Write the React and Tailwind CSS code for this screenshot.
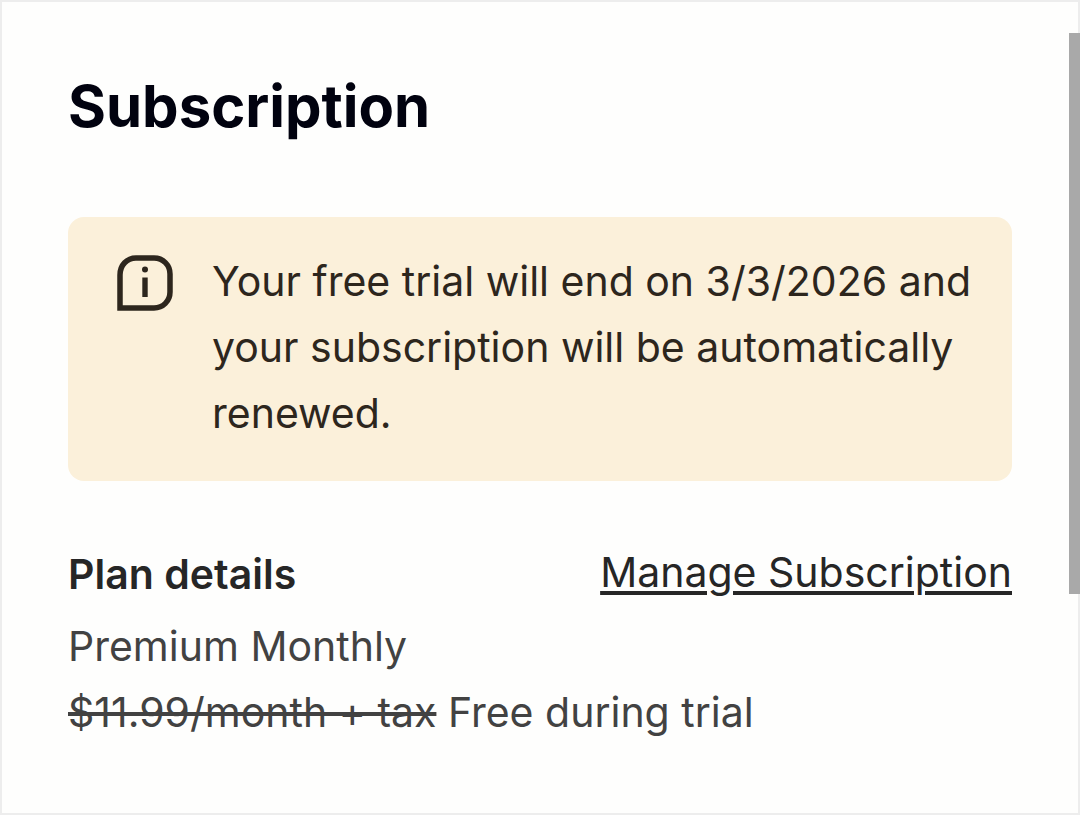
import React from "react";

const InfoIcon = () => (
  <svg className="mt-[7px] size-14 shrink-0" viewBox="0 0 56 56" fill="none" aria-hidden="true">
    <path
      d="M3 53V20C3 10 10 3 19 3H37C46 3 53 10 53 19V37C53 46 46 53 37 53Z"
      stroke="currentColor"
      strokeWidth="5.5"
    />
    <circle cx="28" cy="14.500" r="3" fill="currentColor" />
    <path d="M25.3 22.500H30.700V42H25.300Z" fill="currentColor" />
  </svg>
);

const App = () => {
  return (
    <div className="relative min-h-screen border-2 border-[#ededed] bg-[#fefefd] font-['Inter',sans-serif] text-[#262626]">
      <main className="px-[66px] pt-16 pb-16">
        <h1 className="text-[58px] leading-[80px] font-bold text-[#01020f]">Subscription</h1>

        <div className="mt-[71px] flex gap-[39px] rounded-2xl bg-[#fbf0da] pt-[31px] pr-10 pb-[35px] pl-[49px] text-[#2d261d]">
          <InfoIcon />
          <p className="text-[41px] leading-[66px]">
            Your free trial will end on 3/3/2026 and your subscription will be automatically renewed.
          </p>
        </div>

        <section className="mt-[60px] text-[41px] leading-[66px] text-[#424242]">
          <div className="flex items-start justify-between">
            <h2 className="font-semibold text-[#262626]">Plan details</h2>
            <a href="#manage" className="leading-[62px] text-[#262626] underline decoration-4 underline-offset-4">
              Manage Subscription
            </a>
          </div>
          <p className="mt-1.5">Premium Monthly</p>
          <p>
            <s className="decoration-4">$11.99/month + tax</s> Free during trial
          </p>
        </section>
      </main>

      {/* scrollbar thumb */}
      <div className="absolute top-[31px] -right-0.5 h-[561px] w-[11px] bg-[#a9a9a9]" />
    </div>
  );
};

export default App;
